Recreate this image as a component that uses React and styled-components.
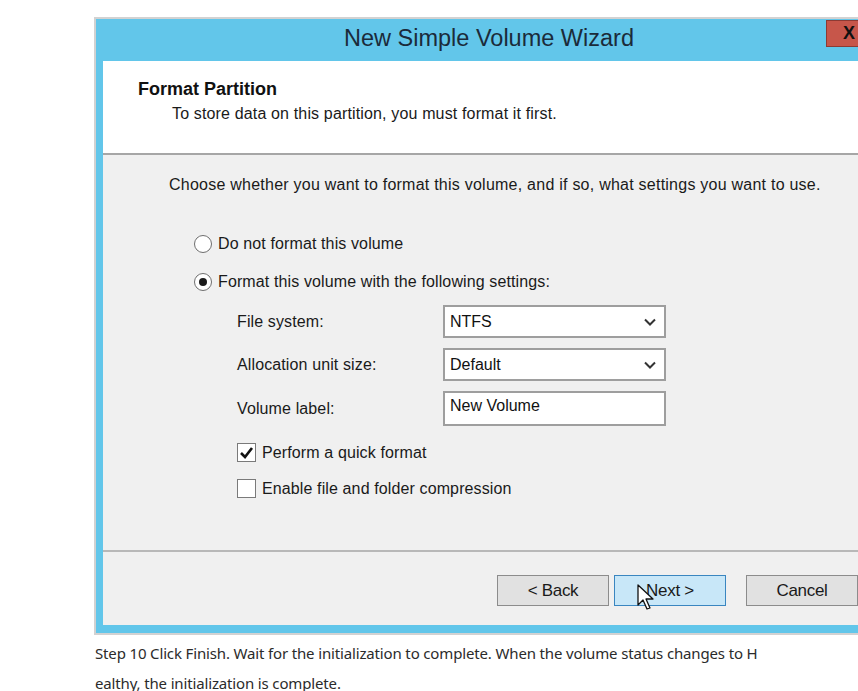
import React from "react";
import styled, { createGlobalStyle } from "styled-components";

const Global = createGlobalStyle`
  html, body { margin: 0; padding: 0; background: #fff; }
  body { font-family: "Liberation Sans", Arial, sans-serif; }
`;

const Page = styled.div`
  width: 858px;
  height: 691px;
  overflow: hidden;
  background: #fff;
  padding: 17px 0 0 94px;
  box-sizing: border-box;
`;

const Window = styled.div`
  width: 788px;
  border: 2px solid #d2d2d2;
  border-right: none;
  background: #62c6ea;
  padding: 0 7px 8px 7px;
  box-sizing: border-box;
`;

const TitleBar = styled.div`
  position: relative;
  height: 42px;
  display: flex;
  align-items: center;
  justify-content: center;
  font-size: 23.5px;
  color: #1b2b3a;
  padding-bottom: 4px;
  box-sizing: border-box;
`;

const CloseButton = styled.div`
  position: absolute;
  right: 3px;
  top: 1px;
  width: 46px;
  height: 27px;
  background: #c7564a;
  border: 1px solid #8d3a33;
  box-sizing: border-box;
  display: flex;
  align-items: center;
  justify-content: center;
  font-weight: bold;
  font-size: 18px;
  color: #111;
`;

const Client = styled.div`
  background: #f0f0f0;
  display: flex;
  flex-direction: column;
`;

const Header = styled.div`
  background: #fff;
  height: 94px;
  padding: 18px 0 0 35px;
  box-sizing: border-box;
  border-bottom: 2px solid #a6a6a6;
`;

const HeaderTitle = styled.div`
  font-weight: bold;
  font-size: 18px;
  color: #111;
`;

const HeaderSub = styled.div`
  font-size: 16px;
  color: #1a1a1a;
  margin: 5px 0 0 34px;
  letter-spacing: 0.15px;
`;

const Body = styled.div`
  height: 397px;
  padding: 21px 0 0 66px;
  box-sizing: border-box;
  border-bottom: 2px solid #b8b8b8;
  color: #1a1a1a;
  font-size: 16px;
  letter-spacing: 0.12px;
`;

const Intro = styled.div`
  margin-bottom: 39px;
  letter-spacing: 0.24px;
`;

const Options = styled.div`
  display: flex;
  flex-direction: column;
  gap: 17px;
  padding-left: 25px;
`;

const OptionRow = styled.div`
  display: flex;
  align-items: center;
  gap: 6px;
  height: 21px;
`;

const Radio = styled.span`
  width: 18px;
  height: 18px;
  border-radius: 50%;
  border: 1px solid #6e6e6e;
  background: #fff;
  display: inline-flex;
  align-items: center;
  justify-content: center;
  box-sizing: border-box;
  &::after {
    content: "";
    width: 8px;
    height: 8px;
    border-radius: 50%;
    background: ${(p) => (p.$checked ? "#1a1a1a" : "transparent")};
  }
`;

const Settings = styled.div`
  display: grid;
  grid-template-columns: 206px 223px;
  row-gap: 10px;
  align-items: center;
  padding-left: 68px;
  margin-top: 13px;
`;

const Label = styled.div``;

const Field = styled.div`
  height: 33px;
  border: 2px solid #9e9e9e;
  background: #fff;
  box-sizing: border-box;
  display: flex;
  align-items: center;
  justify-content: space-between;
  padding: 0 8px 0 5px;
  color: #111;
  font-size: 16px;
  letter-spacing: 0;
  ${(p) => p.$input && "align-items: flex-start; padding-top: 4px; height: 35px;"}
`;

const Checks = styled.div`
  display: flex;
  flex-direction: column;
  gap: 15px;
  padding-left: 68px;
  margin-top: 16px;
`;

const CheckRow = styled.div`
  display: flex;
  align-items: center;
  gap: 6px;
  height: 21px;
`;

const Box = styled.span`
  width: 19px;
  height: 19px;
  border: 1px solid #7a7a7a;
  background: #fff;
  box-sizing: border-box;
  display: inline-flex;
  align-items: center;
  justify-content: center;
`;

const Footer = styled.div`
  height: 73px;
  display: flex;
  align-items: flex-start;
  padding: 23px 0 0 394px;
  box-sizing: border-box;
  gap: 5px;
`;

const Button = styled.div`
  position: relative;
  width: 112px;
  height: 31px;
  box-sizing: border-box;
  border: 1px solid ${(p) => (p.$hover ? "#3a86c0" : "#8c8c8c")};
  background: ${(p) => (p.$hover ? "#c8e7f8" : "#e1e1e1")};
  display: flex;
  align-items: center;
  justify-content: center;
  font-size: 17px;
  color: #1a1a1a;
  letter-spacing: -0.3px;
  margin-left: ${(p) => p.$gap || 0}px;
`;

const Cursor = styled.svg`
  position: absolute;
  left: 22px;
  top: 8px;
`;

const Caption = styled.div`
  margin: 3px 0 0 1px;
  width: 700px;
  font-family: "Noto Sans", "Open Sans", sans-serif;
  font-size: 15px;
  color: #2b2b2b;
  letter-spacing: -0.15px;
`;

const CaptionLine = styled.div`
  line-height: ${(p) => (p.$last ? "16px" : "30px")};
  margin-top: ${(p) => (p.$last ? "7px" : "0")};
  white-space: nowrap;
`;

const Chevron = () => (
  <svg width="12" height="8" viewBox="0 0 12 8">
    <path d="M1 1.5 L6 6.5 L11 1.5" fill="none" stroke="#333" strokeWidth="2" />
  </svg>
);

export default function App() {
  return (
    <>
      <Global />
      <Page>
        <Window>
          <TitleBar>
            New Simple Volume Wizard
            <CloseButton>X</CloseButton>
          </TitleBar>
          <Client>
            <Header>
              <HeaderTitle>Format Partition</HeaderTitle>
              <HeaderSub>To store data on this partition, you must format it first.</HeaderSub>
            </Header>
            <Body>
              <Intro>
                Choose whether you want to format this volume, and if so, what settings you want to use.
              </Intro>
              <Options>
                <OptionRow>
                  <Radio />
                  Do not format this volume
                </OptionRow>
                <OptionRow>
                  <Radio $checked />
                  Format this volume with the following settings:
                </OptionRow>
              </Options>
              <Settings>
                <Label>File system:</Label>
                <Field>
                  NTFS
                  <Chevron />
                </Field>
                <Label>Allocation unit size:</Label>
                <Field>
                  Default
                  <Chevron />
                </Field>
                <Label>Volume label:</Label>
                <Field $input>New Volume</Field>
              </Settings>
              <Checks>
                <CheckRow>
                  <Box>
                    <svg width="15" height="13" viewBox="0 0 15 13">
                      <path d="M2 7 L6 11 L13 2" fill="none" stroke="#111" strokeWidth="2.6" />
                    </svg>
                  </Box>
                  Perform a quick format
                </CheckRow>
                <CheckRow>
                  <Box />
                  Enable file and folder compression
                </CheckRow>
              </Checks>
            </Body>
            <Footer>
              <Button>&lt; Back</Button>
              <Button $hover>
                Next &gt;
                <Cursor width="20" height="30" viewBox="0 0 20 30">
                  <path
                    d="M1 1 L1 21 L6 16 L10 25 L13 24 L9 15 L16 15 Z"
                    fill="#fff"
                    stroke="#111"
                    strokeWidth="1.3"
                    strokeLinejoin="round"
                  />
                </Cursor>
              </Button>
              <Button $gap={15}>Cancel</Button>
            </Footer>
          </Client>
        </Window>
        <Caption>
          <CaptionLine>
            Step 10 Click Finish. Wait for the initialization to complete. When the volume status changes to H
          </CaptionLine>
          <CaptionLine $last>ealthy, the initialization is complete.</CaptionLine>
        </Caption>
      </Page>
    </>
  );
}
